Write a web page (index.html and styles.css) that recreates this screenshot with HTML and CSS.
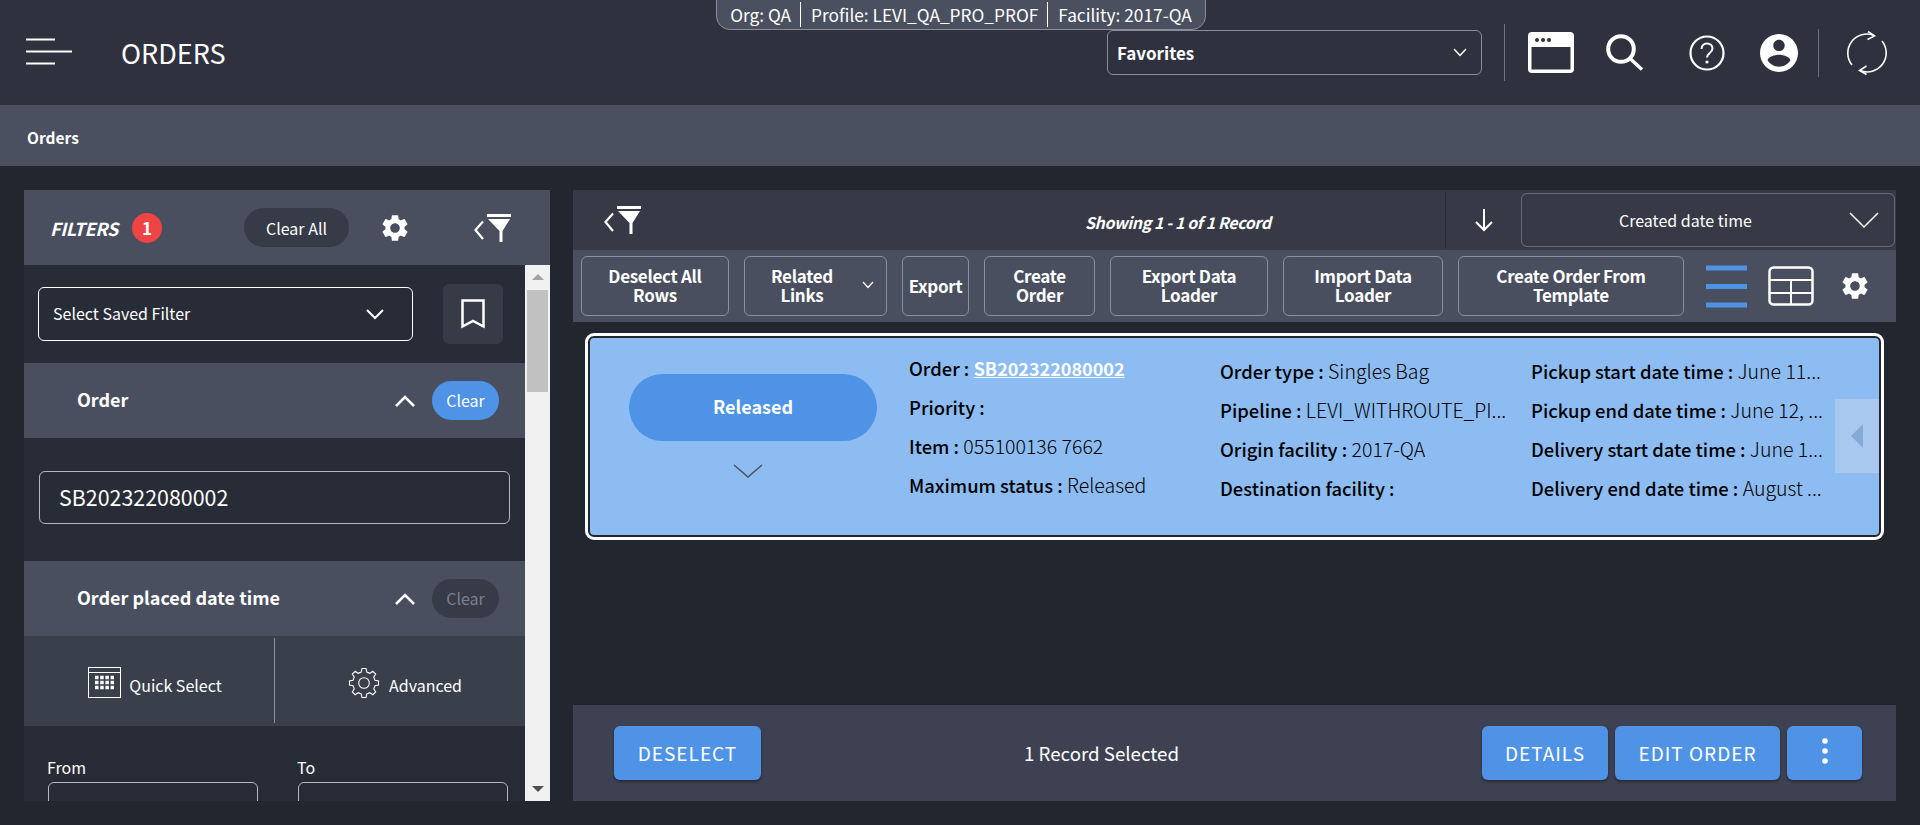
FILE: index.html
```html
<!DOCTYPE html>
<html lang="en">
<head>
    <meta charset="UTF-8">
    <title>Orders</title>
    <link rel="stylesheet" href="styles.css">
</head>
<body>
    <svg class="defs" width="0" height="0">
        <symbol id="cog" viewBox="0 0 24 24"><path d="M19.14 12.94c.04-.3.06-.61.06-.94 0-.32-.02-.64-.07-.94l2.03-1.58c.18-.14.23-.41.12-.61l-1.92-3.32c-.12-.22-.37-.29-.59-.22l-2.39.96c-.5-.38-1.03-.7-1.62-.94l-.36-2.54c-.04-.24-.24-.41-.48-.41h-3.84c-.24 0-.43.17-.47.41l-.36 2.54c-.59.24-1.13.57-1.62.94l-2.39-.96c-.22-.08-.47 0-.59.22L2.74 8.87c-.12.21-.08.47.12.61l2.03 1.58c-.05.3-.09.63-.09.94s.02.64.07.94l-2.03 1.58c-.18.14-.23.41-.12.61l1.92 3.32c.12.22.37.29.59.22l2.39-.96c.5.38 1.03.7 1.62.94l.36 2.54c.05.24.24.41.48.41h3.84c.24 0 .44-.17.47-.41l.36-2.54c.59-.24 1.13-.56 1.62-.94l2.39.96c.22.08.47 0 .59-.22l1.92-3.32c.12-.22.07-.47-.12-.61l-2.01-1.58zM12 15.6c-1.98 0-3.6-1.62-3.6-3.6s1.62-3.6 3.6-3.6 3.6 1.62 3.6 3.6-1.62 3.6-3.6 3.6z" fill="#fff"/></symbol>
        <symbol id="funnel" viewBox="0 0 40 28"><path d="M14 0h24v3H14zM15 5h22l-7.500 12v11h-3V17z" fill="#fff"/><path d="M10 7.500L2.500 16l7.500 9" fill="none" stroke="#fff" stroke-width="2.200"/></symbol>
    </svg>

    <header class="topbar">
        <div class="context-pill">
            <span>Org: QA</span><span>Profile: LEVI_QA_PRO_PROF</span><span>Facility: 2017-QA</span>
        </div>
        <svg class="menu-icon" width="46" height="28" viewBox="0 0 46 28"><path d="M0 1.500h29M0 13.500h46M0 25.500h29" stroke="#fff" stroke-width="2"/></svg>
        <div class="page-title">ORDERS</div>
        <div class="favorites">
            <span>Favorites</span>
            <svg width="14" height="9" viewBox="0 0 14 9"><path d="M1 1l6 6.500L13 1" fill="none" stroke="#fff" stroke-width="1.500"/></svg>
        </div>
        <div class="vline vline-tall"></div>
        <svg class="icon-window" width="46" height="41" viewBox="0 0 46 41"><rect width="46" height="41" rx="4" fill="#fff"/><rect x="3.500" y="15" width="39" height="22.500" fill="#2f323e"/><circle cx="9" cy="8" r="2" fill="#2f323e"/><circle cx="15" cy="8" r="2" fill="#2f323e"/><circle cx="21" cy="8" r="2" fill="#2f323e"/></svg>
        <svg class="icon-search" width="38" height="37" viewBox="0 0 38 37"><circle cx="15" cy="15" r="12.800" fill="none" stroke="#fff" stroke-width="4"/><path d="M23.500 24L36 35.500" stroke="#fff" stroke-width="3.500"/></svg>
        <svg class="icon-help" width="36" height="36" viewBox="0 0 36 36"><circle cx="18" cy="18" r="16.500" fill="none" stroke="#fff" stroke-width="2.200"/><path d="M12.500 14c0-3.500 2.500-5.500 5.500-5.500s5.500 2 5.500 5c0 4.500-5.500 4.500-5.500 9" fill="none" stroke="#fff" stroke-width="2"/><circle cx="18" cy="27" r="1.600" fill="#fff"/></svg>
        <svg class="icon-user" width="38" height="38" viewBox="2 2 20 20"><path d="M12 2C6.480 2 2 6.480 2 12s4.480 10 10 10 10-4.480 10-10S17.520 2 12 2zm0 3c1.660 0 3 1.340 3 3s-1.340 3-3 3-3-1.340-3-3 1.340-3 3-3zm0 14.200c-2.500 0-4.710-1.280-6-3.220.030-1.990 4-3.080 6-3.080 1.990 0 5.970 1.090 6 3.080-1.290 1.940-3.500 3.220-6 3.220z" fill="#fff"/></svg>
        <div class="vline"></div>
        <svg class="icon-refresh" width="42" height="44" viewBox="0 0 42 44"><path d="M6 34A19 19 0 0 1 28 4.500M36 10A19 19 0 0 1 14 39.500" fill="none" stroke="#fff" stroke-width="1.600"/><path d="M22 .5l6.500 4.500-7 3.500M20.500 35l-7 4.500 7 4" fill="none" stroke="#fff" stroke-width="1.600"/></svg>
    </header>

    <div class="breadcrumb">Orders</div>

    <main class="content">
        <aside class="filters">
            <div class="filters-head">
                <span class="filters-title">FILTERS</span>
                <span class="badge">1</span>
                <button class="clear-all">Clear All</button>
                <svg class="filters-cog" width="32" height="32"><use href="#cog"/></svg>
                <svg class="filters-funnel" width="40" height="28"><use href="#funnel"/></svg>
            </div>
            <div class="filters-main">
                <div class="filters-scroll">
                    <div class="saved-row">
                        <div class="saved-select">
                            <span>Select Saved Filter</span>
                            <svg width="18" height="11" viewBox="0 0 18 11"><path d="M1 1l8 8 8-8" fill="none" stroke="#fff" stroke-width="2"/></svg>
                        </div>
                        <div class="bookmark">
                            <svg width="24" height="30" viewBox="0 0 24 30"><path d="M1.500 1.500h21v26L12 22 1.500 27.500z" fill="none" stroke="#fff" stroke-width="2.500"/></svg>
                        </div>
                    </div>

                    <div class="section-head">
                        <span class="section-name">Order</span>
                        <svg class="section-caret" width="20" height="12" viewBox="0 0 20 12"><path d="M1 11l9-9 9 9" fill="none" stroke="#fff" stroke-width="2.500"/></svg>
                        <span class="clear-btn active">Clear</span>
                    </div>
                    <div class="order-field">
                        <div class="order-input">SB202322080002</div>
                    </div>

                    <div class="section-head">
                        <span class="section-name">Order placed date time</span>
                        <svg class="section-caret" width="20" height="12" viewBox="0 0 20 12"><path d="M1 11l9-9 9 9" fill="none" stroke="#fff" stroke-width="2.500"/></svg>
                        <span class="clear-btn">Clear</span>
                    </div>
                    <div class="date-tabs">
                        <div class="date-tab">
                            <svg width="33" height="31" viewBox="0 0 33 31"><rect x=".5" y=".5" width="32" height="30" fill="none" stroke="#fff"/><path d="M0 5.500h33" stroke="#fff"/><path d="M7 10.500h19M7 15.500h19M7 20.500h19" stroke="#fff" stroke-width="3.500" stroke-dasharray="3.500 1.700"/></svg>
                            <span>Quick Select</span>
                        </div>
                        <div class="date-tab date-tab-right">
                            <svg width="32" height="32" viewBox="0 0 24 24"><polygon points="9.940,3.750 10.470,1.110 13.530,1.110 14.060,3.750 16.380,4.710 18.620,3.220 20.780,5.380 19.290,7.620 20.250,9.940 22.890,10.470 22.890,13.530 20.250,14.060 19.290,16.380 20.780,18.620 18.620,20.780 16.380,19.290 14.060,20.250 13.530,22.890 10.470,22.890 9.940,20.250 7.620,19.290 5.380,20.780 3.220,18.620 4.710,16.380 3.750,14.060 1.110,13.530 1.110,10.470 3.750,9.940 4.710,7.620 3.220,5.380 5.380,3.220 7.620,4.710" fill="none" stroke="#fff" stroke-width=".8"/><circle cx="12" cy="12" r="4" fill="none" stroke="#fff" stroke-width=".8"/></svg>
                            <span>Advanced</span>
                        </div>
                    </div>
                    <div class="date-range">
                        <div class="date-col">
                            <label>From</label>
                            <div class="date-input">Select date</div>
                        </div>
                        <div class="date-col">
                            <label>To</label>
                            <div class="date-input">Select date</div>
                        </div>
                    </div>
                </div>
                <div class="scrollbar">
                    <span class="arrow-up"></span>
                    <span class="thumb"></span>
                    <span class="arrow-down"></span>
                </div>
            </div>
        </aside>

        <section class="results">
            <div class="results-top">
                <svg class="results-funnel" width="40" height="28"><use href="#funnel"/></svg>
                <div class="showing">Showing 1 - 1 of 1 Record</div>
                <div class="sort-arrow">
                    <svg width="20" height="24" viewBox="0 0 20 24"><path d="M10 1v21M2 14l8 8 8-8" fill="none" stroke="#fff" stroke-width="2"/></svg>
                </div>
                <div class="sort-select">
                    <span>Created date time</span>
                    <svg width="30" height="17" viewBox="0 0 30 17"><path d="M1 1l14 14L29 1" fill="none" stroke="#fff" stroke-width="1.500"/></svg>
                </div>
            </div>

            <div class="toolbar">
                <button class="tool w-deselect">Deselect All<br>Rows</button>
                <button class="tool w-related"><span>Related<br>Links</span><svg width="12" height="8" viewBox="0 0 12 8"><path d="M1 1l5 5.500L11 1" fill="none" stroke="#fff" stroke-width="1.300"/></svg></button>
                <button class="tool w-export">Export</button>
                <button class="tool w-create">Create<br>Order</button>
                <button class="tool w-loader">Export Data<br>Loader</button>
                <button class="tool w-import">Import Data<br>Loader</button>
                <button class="tool w-template">Create Order From<br>Template</button>
                <svg class="view-list" width="41" height="43" viewBox="0 0 41 43"><path d="M0 3h41M0 21.500h41M0 40h41" stroke="#4f93e6" stroke-width="5"/></svg>
                <svg class="view-table" width="46" height="40" viewBox="0 0 46 40"><rect x="1.500" y="1.500" width="43" height="37" rx="4" fill="none" stroke="#fff" stroke-width="2.500"/><path d="M1 14h44M1 27h44M23 14v25" stroke="#fff" stroke-width="2"/></svg>
                <svg class="view-cog" width="32" height="32"><use href="#cog"/></svg>
            </div>

            <div class="card-wrap">
                <article class="card">
                    <div class="status-col">
                        <div class="status-pill">Released</div>
                        <svg width="30" height="14" viewBox="0 0 30 14"><path d="M1 1l14 12L29 1" fill="none" stroke="#4a5060" stroke-width="1.500"/></svg>
                    </div>
                    <div class="card-col col-first">
                        <div class="field"><b>Order :</b> <a class="order-link">SB202322080002</a></div>
                        <div class="field"><b>Priority :</b></div>
                        <div class="field"><b>Item :</b> 055100136 7662</div>
                        <div class="field"><b>Maximum status :</b> Released</div>
                    </div>
                    <div class="card-col">
                        <div class="field"><b>Order type :</b> Singles Bag</div>
                        <div class="field"><b>Pipeline :</b> LEVI_WITHROUTE_PI...</div>
                        <div class="field"><b>Origin facility :</b> 2017-QA</div>
                        <div class="field"><b>Destination facility :</b></div>
                    </div>
                    <div class="card-col">
                        <div class="field"><b>Pickup start date time :</b> June 11...</div>
                        <div class="field"><b>Pickup end date time :</b> June 12, ...</div>
                        <div class="field"><b>Delivery start date time :</b> June 1...</div>
                        <div class="field"><b>Delivery end date time :</b> August ...</div>
                    </div>
                    <div class="card-handle"><span></span></div>
                </article>
            </div>

            <div class="action-bar">
                <button class="action">DESELECT</button>
                <div class="selected-count">1 Record Selected</div>
                <div class="action-group">
                    <button class="action w-details">DETAILS</button>
                    <button class="action w-edit">EDIT ORDER</button>
                    <button class="action w-more"><svg width="6" height="26" viewBox="0 0 6 26"><circle cx="3" cy="3" r="2.800" fill="#fff"/><circle cx="3" cy="13" r="2.800" fill="#fff"/><circle cx="3" cy="23" r="2.800" fill="#fff"/></svg></button>
                </div>
            </div>
        </section>
    </main>
</body>
</html>
```

FILE: styles.css
```css
* {
    box-sizing: border-box;
}
html, body {
    height: 100%;
}
body {
    margin: 0;
    overflow: hidden;
    background-color: #22262e;
    color: #fff;
    font-family: "Noto Sans CJK JP", "Noto Sans", sans-serif;
    font-size: 16px;
}
button {
    font-family: inherit;
    color: #fff;
    cursor: pointer;
}
.defs {
    position: absolute;
}

/* top bar */
.topbar {
    position: relative;
    display: flex;
    align-items: center;
    height: 105px;
    padding: 0 32px 0 26px;
    background-color: #2f323e;
}
.context-pill {
    position: absolute;
    top: -1px;
    left: 716px;
    width: 490px;
    height: 31px;
    display: flex;
    align-items: center;
    justify-content: center;
    background-color: #4a5060;
    border: 1px solid #8a8f9c;
    border-radius: 0 0 14px 14px;
    font-size: 17.300px;
}
.context-pill span + span {
    margin-left: 9px;
    padding-left: 10px;
    border-left: 1px solid #fff;
}
.menu-icon {
    margin-top: -1px;
}
.page-title {
    margin-left: 49px;
    font-size: 27px;
}
.favorites {
    display: flex;
    align-items: center;
    justify-content: space-between;
    width: 375px;
    height: 45px;
    margin-left: auto;
    padding: 0 14px 0 9px;
    border: 1px solid #8a8f9c;
    border-radius: 6px;
    font-weight: 700;
    font-size: 17px;
}
.vline {
    width: 1px;
    height: 48px;
    margin: 0 27px 0 20px;
    background-color: #6d717d;
}
.vline-tall {
    height: 57px;
    margin: 0 23px 0 22px;
}
.icon-search {
    margin-left: 32px;
}
.icon-help {
    margin-left: 45px;
}
.icon-user {
    margin-left: 35px;
}

.breadcrumb {
    height: 61px;
    padding: 2px 0 0 27px;
    background-color: #4a5060;
    font-weight: 700;
    font-size: 15.500px;
    line-height: 61px;
}

/* main */
.content {
    display: flex;
    gap: 23px;
    height: 611px;
    margin-top: 24px;
    padding: 0 24px;
}

/* filters */
.filters {
    display: flex;
    flex-direction: column;
    width: 526px;
    background-color: #282c36;
}
.filters-head {
    display: flex;
    align-items: center;
    flex: none;
    height: 75px;
    padding-left: 26px;
    background-color: #4a4f5f;
}
.filters-title {
    width: 70px;
    font-size: 18px;
    font-weight: 700;
    font-style: italic;
    letter-spacing: -.3px;
}
.badge {
    width: 30px;
    height: 30px;
    margin-left: 12px;
    border-radius: 50%;
    background-color: #ee4444;
    font-size: 17px;
    font-weight: 700;
    line-height: 30px;
    text-align: center;
}
.clear-all {
    width: 105px;
    height: 39px;
    margin-left: 82px;
    border: 0;
    border-radius: 20px;
    background-color: #373b48;
    font-size: 16px;
}
.filters-cog {
    margin-left: 30px;
}
.filters-funnel {
    margin-left: 62px;
}
.filters-main {
    display: flex;
    flex: 1;
    min-height: 0;
}
.filters-scroll {
    flex: 1;
    min-width: 0;
    overflow: hidden;
}
.scrollbar {
    position: relative;
    width: 25px;
    background-color: #f1f1f1;
}
.thumb {
    position: absolute;
    top: 25px;
    left: 2px;
    width: 21px;
    height: 102px;
    background-color: #c1c1c1;
}
.arrow-up, .arrow-down {
    position: absolute;
    left: 7px;
    border-left: 6px solid transparent;
    border-right: 6px solid transparent;
}
.arrow-up {
    top: 9px;
    border-bottom: 6px solid #a3a3a3;
}
.arrow-down {
    bottom: 9px;
    border-top: 6px solid #505050;
}
.saved-row {
    display: flex;
    align-items: center;
    justify-content: space-between;
    height: 98px;
    padding: 0 22px 0 14px;
}
.saved-select {
    display: flex;
    align-items: center;
    justify-content: space-between;
    width: 375px;
    height: 54px;
    padding: 0 28px 0 14px;
    border: 1px solid #fff;
    border-radius: 6px;
    font-size: 16px;
}
.saved-select span {
    margin-top: -2px;
}
.bookmark {
    display: flex;
    align-items: center;
    justify-content: center;
    width: 60px;
    height: 60px;
    border-radius: 6px;
    background-color: #373b48;
}
.section-head {
    display: flex;
    align-items: center;
    height: 75px;
    padding: 0 26px 0 53px;
    background-color: #4a4f5f;
}
.section-name {
    flex: 1;
    margin-top: -3px;
    font-size: 18px;
    font-weight: 700;
}
.clear-btn {
    width: 67px;
    height: 39px;
    margin-left: 17px;
    border-radius: 20px;
    background-color: #373b48;
    color: #7c808c;
    font-size: 16px;
    line-height: 38px;
    text-align: center;
}
.clear-btn.active {
    background-color: #4f93e6;
    color: #fff;
}
.order-field {
    height: 123px;
    padding: 33px 15px 0 15px;
}
.order-input {
    height: 53px;
    padding-left: 19px;
    border: 1px solid #b5b8bf;
    border-radius: 6px;
    font-size: 21.400px;
    line-height: 50px;
}
.date-tabs {
    display: flex;
    height: 90px;
    padding: 2px 0 3px;
    background-color: #3a3f4c;
}
.date-tab {
    display: flex;
    align-items: center;
    justify-content: center;
    gap: 8px;
    width: 250px;
    padding: 4px 0 0 12px;
    font-size: 16px;
}
.date-tab span {
    margin-top: 4px;
}
.date-tab-right {
    flex: 1;
    gap: 9px;
    border-left: 1px solid #8a8f9c;
    padding-right: 2px;
}
.date-range {
    display: flex;
    gap: 40px;
    padding: 29px 16px 0 24px;
}
.date-col {
    width: 210px;
}
.date-col label {
    display: block;
    margin: 0 0 3px -1px;
    font-size: 16px;
    line-height: 24px;
}
.date-input {
    height: 54px;
    padding-top: 13px;
    border: 1px solid #b5b8bf;
    border-radius: 6px;
    text-align: center;
    font-size: 16px;
}

/* results */
.results {
    flex: 1;
    min-width: 0;
    display: flex;
    flex-direction: column;
}
.results-top {
    display: flex;
    align-items: center;
    flex: none;
    height: 60px;
    padding: 0 1px 0 30px;
    background-color: #373a46;
}
.results-funnel {
    flex: none;
}
.showing {
    flex: 1;
    padding-left: 442px;
    padding-top: 4px;
    font-size: 16px;
    font-weight: 700;
    font-style: italic;
    letter-spacing: -.4px;
}
.sort-arrow {
    display: flex;
    align-items: center;
    justify-content: center;
    width: 76px;
    height: 58px;
    border-left: 1px solid #2a2d37;
}
.sort-select {
    display: flex;
    align-items: center;
    justify-content: space-between;
    width: 374px;
    height: 54px;
    padding: 0 15px 0 97px;
    border: 1px solid #656977;
    border-radius: 6px;
    font-size: 16px;
}
.toolbar {
    display: flex;
    align-items: center;
    gap: 15px;
    flex: none;
    height: 72px;
    padding-left: 8px;
    background-color: #4a4f5f;
}
.tool {
    display: flex;
    align-items: center;
    justify-content: center;
    height: 60px;
    padding: 0 0 2px;
    border: 1px solid #8a8f9c;
    border-radius: 6px;
    background: transparent;
    font-size: 17px;
    font-weight: 700;
    line-height: 19px;
    text-align: center;
    letter-spacing: -.3px;
}
.w-deselect { width: 148px; }
.w-related {
    justify-content: flex-start;
    width: 143px;
    gap: 29px;
    padding-left: 26px;
}
.w-export { width: 67px; }
.w-create { width: 111px; }
.w-loader { width: 158px; }
.w-import { width: 160px; }
.w-template { width: 226px; }
.view-list {
    margin-left: 7px;
}
.view-table {
    margin-left: 6px;
}
.view-cog {
    margin-left: 10px;
}
.card-wrap {
    flex: 1;
    padding: 14px 15px 0;
}
.card {
    position: relative;
    display: flex;
    height: 201px;
    padding-top: 10px;
    background-color: #8dbcf2;
    border: 2px solid #22262e;
    border-radius: 6px;
    box-shadow: 0 0 0 3px #fff;
    color: #000;
}
.status-col {
    display: flex;
    flex-direction: column;
    align-items: center;
    flex: none;
    width: 248px;
    margin-left: 39px;
    padding-top: 26px;
}
.status-col svg {
    margin-top: 23px;
    margin-left: -10px;
}
.status-pill {
    width: 248px;
    height: 67px;
    border-radius: 34px;
    background-color: #4f93e6;
    color: #fff;
    font-size: 18px;
    font-weight: 700;
    line-height: 64px;
    text-align: center;
}
.card-col {
    flex: none;
    width: 311px;
    padding-top: 3px;
    font-size: 19.500px;
    font-weight: 300;
}
.col-first {
    margin-left: 32px;
    padding-top: 0;
}
.field {
    height: 39px;
    line-height: 39px;
    white-space: nowrap;
}
.field b {
    font-size: 18.400px;
    font-weight: 500;
}
.order-link {
    color: #fff;
    font-size: 18px;
    font-weight: 700;
    text-decoration: underline;
}
.card-handle {
    position: absolute;
    top: 61px;
    right: 0;
    width: 44px;
    height: 74px;
    display: flex;
    align-items: center;
    justify-content: center;
    background-color: #a8c8ef;
}
.card-handle span {
    border-top: 12px solid transparent;
    border-bottom: 12px solid transparent;
    border-right: 12px solid #86a9d6;
}
.action-bar {
    display: flex;
    align-items: center;
    flex: none;
    height: 96px;
    padding: 0 34px 0 41px;
    background-color: #3e4151;
}
.action {
    width: 147px;
    height: 54px;
    padding: 0 0 2px;
    border: 0;
    border-radius: 6px;
    background-color: #4f93e6;
    box-shadow: 0 2px 3px rgba(0, 0, 0, .35);
    font-size: 19px;
    letter-spacing: 1px;
}
.selected-count {
    margin: -2px 0 0 263px;
    font-size: 18.700px;
}
.action-group {
    display: flex;
    gap: 7px;
    margin-left: auto;
}
.w-details { width: 126px; }
.w-edit { width: 165px; }
.w-more { width: 75px; padding: 0; }
```
